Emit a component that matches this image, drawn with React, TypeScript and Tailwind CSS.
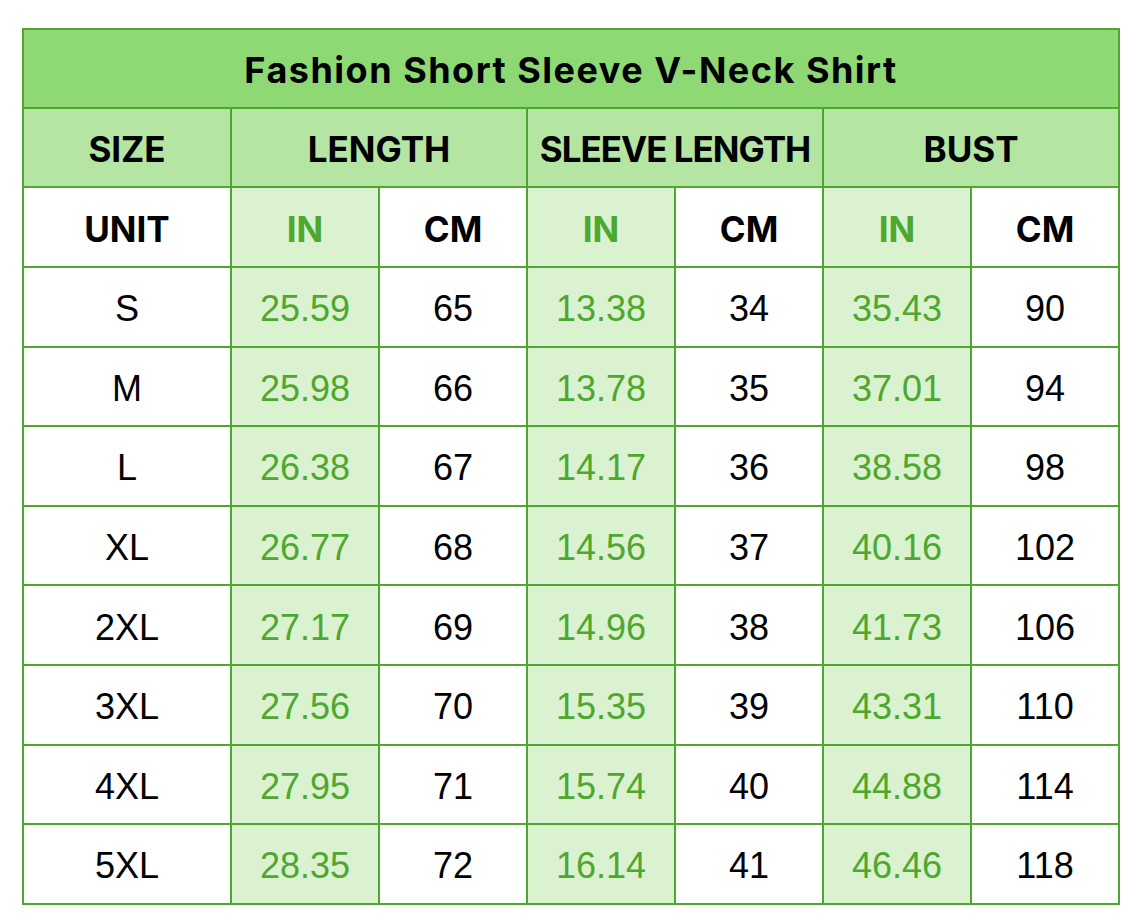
const rows = [
  ["S", "25.59", "65", "13.38", "34", "35.43", "90"],
  ["M", "25.98", "66", "13.78", "35", "37.01", "94"],
  ["L", "26.38", "67", "14.17", "36", "38.58", "98"],
  ["XL", "26.77", "68", "14.56", "37", "40.16", "102"],
  ["2XL", "27.17", "69", "14.96", "38", "41.73", "106"],
  ["3XL", "27.56", "70", "15.35", "39", "43.31", "110"],
  ["4XL", "27.95", "71", "15.74", "40", "44.88", "114"],
  ["5XL", "28.35", "72", "16.14", "41", "46.46", "118"],
];

const cell = "border-2 border-[#4ea72e] text-center align-middle p-0";
const head = "font-['Inter',sans-serif] font-bold text-[35px] text-black pt-[4px]";
const num = "font-['Liberation_Sans',Arial,sans-serif] text-[36px] pt-[5px]";

export default function App() {
  return (
    <div className="w-[1144px] h-[922px] bg-white pt-[28px] pl-[22px]">
      <table className="border-collapse table-fixed w-[1096px]">
        <colgroup>
          <col className="w-[208px]" />
          {[0, 1, 2, 3, 4, 5].map((i) => (
            <col key={i} className="w-[148px]" />
          ))}
        </colgroup>
        <tbody>
          <tr className="h-[79px]">
            <td
              colSpan={7}
              className={`${cell} font-['Inter',sans-serif] font-bold text-[36px] tracking-[1.5px] text-black bg-[#8ed973] pt-[2px]`}
            >
              Fashion Short Sleeve V-Neck Shirt
            </td>
          </tr>
          <tr className="h-[79px] bg-[#b4e5a2]">
            <td className={`${cell} ${head}`}>SIZE</td>
            <td colSpan={2} className={`${cell} ${head}`}>LENGTH</td>
            <td colSpan={2} className={`${cell} ${head} tracking-[-1px]`}>SLEEVE LENGTH</td>
            <td colSpan={2} className={`${cell} ${head}`}>BUST</td>
          </tr>
          <tr className="h-[80px]">
            <td className={`${cell} ${head}`}>UNIT</td>
            {[0, 1, 2].map((i) => [
              <td key={`in${i}`} className={`${cell} ${head} bg-[#daf2d0] !text-[#4ea72e]`}>IN</td>,
              <td key={`cm${i}`} className={`${cell} ${head}`}>CM</td>,
            ])}
          </tr>
          {rows.map((r) => (
            <tr key={r[0]} className="h-[79.6px]">
              {r.map((v, j) => (
                <td
                  key={j}
                  className={`${cell} ${num} ${
                    j % 2 === 1 ? "bg-[#daf2d0] text-[#4ea72e]" : "text-black"
                  }`}
                >
                  {v}
                </td>
              ))}
            </tr>
          ))}
        </tbody>
      </table>
    </div>
  );
}
